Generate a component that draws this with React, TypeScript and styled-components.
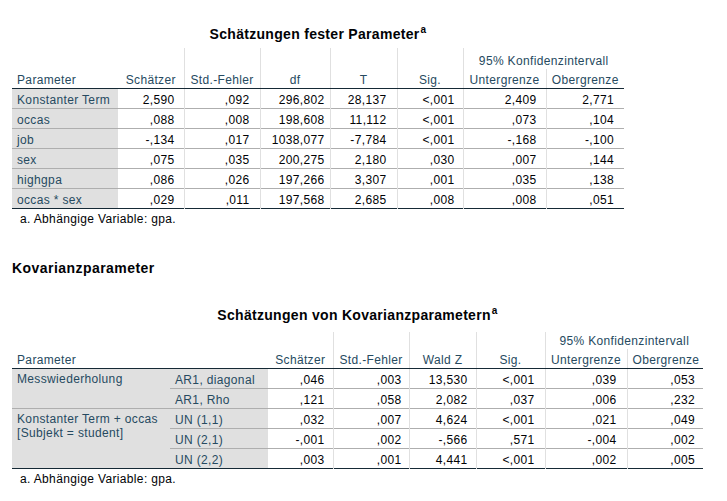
import React from 'react';
import styled, { createGlobalStyle } from 'styled-components';

const GlobalStyle = createGlobalStyle`
  html, body {
    margin: 0;
    padding: 0;
    background: #ffffff;
  }
  body {
    font-family: "Liberation Sans", Arial, sans-serif;
    font-size: 12px;
    letter-spacing: 0.35px;
    color: #010205;
  }
`;

const Page = styled.div`
  display: flex;
  flex-direction: column;
  align-items: flex-start;
  padding: 26px 0 0 12px;
`;

const Table = styled.table`
  border-collapse: collapse;
  table-layout: fixed;
  font-size: 12px;
`;

const Caption = styled.caption<{ $gap: number }>`
  font-size: 14px;
  font-weight: bold;
  letter-spacing: 0.3px;
  line-height: 16px;
  color: #010205;
  padding-bottom: ${p => p.$gap}px;
  white-space: nowrap;
`;

const Sup = styled.sup`
  font-size: 10px;
  line-height: 0;
  vertical-align: 6px;
  margin-left: 1px;
`;

const HeadCell = styled.th<{ $align?: 'left' | 'center'; $line?: boolean; $h?: number }>`
  font-weight: normal;
  color: #264a60;
  text-align: ${p => p.$align || 'center'};
  vertical-align: bottom;
  padding: 0 5px 1px;
  height: ${p => p.$h || 18}px;
  line-height: 14px;
  white-space: nowrap;
  border-left: ${p => (p.$line ? '1px solid #e0e0e0' : 'none')};
  border-bottom: 1px solid #152935;
`;

const GroupCell = styled(HeadCell)`
  border-bottom: none;
`;

const Row = styled.tr`
  & + & > td {
    border-top: 1px solid #aeaeae;
  }
`;

const LabelCell = styled.td<{ $pad?: number }>`
  background: #e0e0e0;
  color: #264a60;
  text-align: left;
  vertical-align: top;
  padding: 3px 5px 0 ${p => p.$pad || 5}px;
  height: 16px;
  line-height: 16px;
  white-space: nowrap;
`;

const GroupLine = styled.div`
  line-height: 14px;
`;

const NumCell = styled.td<{ $pad: number; $line?: boolean }>`
  text-align: right;
  vertical-align: top;
  padding: 3px ${p => p.$pad}px 0 0;
  height: 16px;
  line-height: 16px;
  white-space: nowrap;
  border-left: ${p => (p.$line ? '1px solid #e0e0e0' : 'none')};
`;

const Body = styled.tbody`
  border-bottom: 1px solid #152935;
`;

const Footnote = styled.div<{ $top: number }>`
  margin-top: ${p => p.$top}px;
  padding-left: 8px;
  line-height: 14px;
  color: #010205;
`;

const Heading = styled.div`
  margin-top: 34px;
  font-size: 14px;
  font-weight: bold;
  letter-spacing: 0.45px;
  line-height: 16px;
  color: #010205;
`;

const Section = styled.div<{ $top: number }>`
  margin-top: ${p => p.$top}px;
`;

const fixedCols = [106, 66, 76, 70, 67, 66, 83, 78];
const fixedPad = [9, 10, 5, 10, 8, 9, 10];
const fixedRows: [string, string[]][] = [
  ['Konstanter Term', ['2,590', ',092', '296,802', '28,137', '<,001', '2,409', '2,771']],
  ['occas', [',088', ',008', '198,608', '11,112', '<,001', ',073', ',104']],
  ['job', ['-,134', ',017', '1038,077', '-7,784', '<,001', '-,168', '-,100']],
  ['sex', [',075', ',035', '200,275', '2,180', ',030', ',007', ',144']],
  ['highgpa', [',086', ',026', '197,266', '3,307', ',001', ',035', ',138']],
  ['occas * sex', [',029', ',011', '197,568', '2,685', ',008', ',008', ',051']],
];

const covCols = [158, 98, 65, 76, 67, 69, 82, 76];
const covPad = [8, 7, 8, 10, 10, 8];
const covRows: { group?: string[]; span?: number; label: string; values: string[] }[] = [
  { group: ['Messwiederholung'], span: 2, label: 'AR1, diagonal', values: [',046', ',003', '13,530', '<,001', ',039', ',053'] },
  { label: 'AR1, Rho', values: [',121', ',058', '2,082', ',037', ',006', ',232'] },
  { group: ['Konstanter Term + occas', '[Subjekt = student]'], span: 3, label: 'UN (1,1)', values: [',032', ',007', '4,624', '<,001', ',021', ',049'] },
  { label: 'UN (2,1)', values: ['-,001', ',002', '-,566', ',571', '-,004', ',002'] },
  { label: 'UN (2,2)', values: [',003', ',001', '4,441', '<,001', ',002', ',005'] },
];

const Cols = ({ widths }: { widths: number[] }) => (
  <colgroup>
    {widths.map((w, i) => <col key={i} style={{ width: w }} />)}
  </colgroup>
);

const FixedTable = () => (
  <Table style={{ width: fixedCols.reduce((a, b) => a + b, 0) }}>
    <Caption $gap={6}>Schätzungen fester Parameter<Sup>a</Sup></Caption>
    <Cols widths={fixedCols} />
    <thead>
      <tr>
        <HeadCell rowSpan={2} $align="left">Parameter</HeadCell>
        <HeadCell rowSpan={2}>Schätzer</HeadCell>
        <HeadCell rowSpan={2} $line>Std.-Fehler</HeadCell>
        <HeadCell rowSpan={2} $line>df</HeadCell>
        <HeadCell rowSpan={2} $line>T</HeadCell>
        <HeadCell rowSpan={2} $line>Sig.</HeadCell>
        <GroupCell colSpan={2} $line $h={20}>95% Konfidenzintervall</GroupCell>
      </tr>
      <tr>
        <HeadCell $line $h={18}>Untergrenze</HeadCell>
        <HeadCell $line $h={18}>Obergrenze</HeadCell>
      </tr>
    </thead>
    <Body>
      {fixedRows.map(([label, values]) => (
        <Row key={label}>
          <LabelCell>{label}</LabelCell>
          {values.map((v, i) => (
            <NumCell key={i} $pad={fixedPad[i]} $line={i > 0}>{v}</NumCell>
          ))}
        </Row>
      ))}
    </Body>
  </Table>
);

const CovTable = () => (
  <Table style={{ width: covCols.reduce((a, b) => a + b, 0) }}>
    <Caption $gap={9}>Schätzungen von Kovarianzparametern<Sup>a</Sup></Caption>
    <Cols widths={covCols} />
    <thead>
      <tr>
        <HeadCell rowSpan={2} colSpan={2} $align="left">Parameter</HeadCell>
        <HeadCell rowSpan={2}>Schätzer</HeadCell>
        <HeadCell rowSpan={2} $line>Std.-Fehler</HeadCell>
        <HeadCell rowSpan={2} $line>Wald Z</HeadCell>
        <HeadCell rowSpan={2} $line>Sig.</HeadCell>
        <GroupCell colSpan={2} $line $h={16}>95% Konfidenzintervall</GroupCell>
      </tr>
      <tr>
        <HeadCell $line $h={18}>Untergrenze</HeadCell>
        <HeadCell $line $h={18}>Obergrenze</HeadCell>
      </tr>
    </thead>
    <Body>
      {covRows.map(r => (
        <Row key={r.label}>
          {r.group && (
            <LabelCell rowSpan={r.span}>
              {r.group.map(g => <GroupLine key={g}>{g}</GroupLine>)}
            </LabelCell>
          )}
          <LabelCell>{r.label}</LabelCell>
          {r.values.map((v, i) => (
            <NumCell key={i} $pad={covPad[i]} $line={i > 0}>{v}</NumCell>
          ))}
        </Row>
      ))}
    </Body>
  </Table>
);

const App = () => (
  <>
    <GlobalStyle />
    <Page>
      <FixedTable />
      <Footnote $top={3}>a. Abhängige Variable: gpa.</Footnote>
      <Heading>Kovarianzparameter</Heading>
      <Section $top={31}>
        <CovTable />
      </Section>
      <Footnote $top={3}>a. Abhängige Variable: gpa.</Footnote>
    </Page>
  </>
);

export default App;
